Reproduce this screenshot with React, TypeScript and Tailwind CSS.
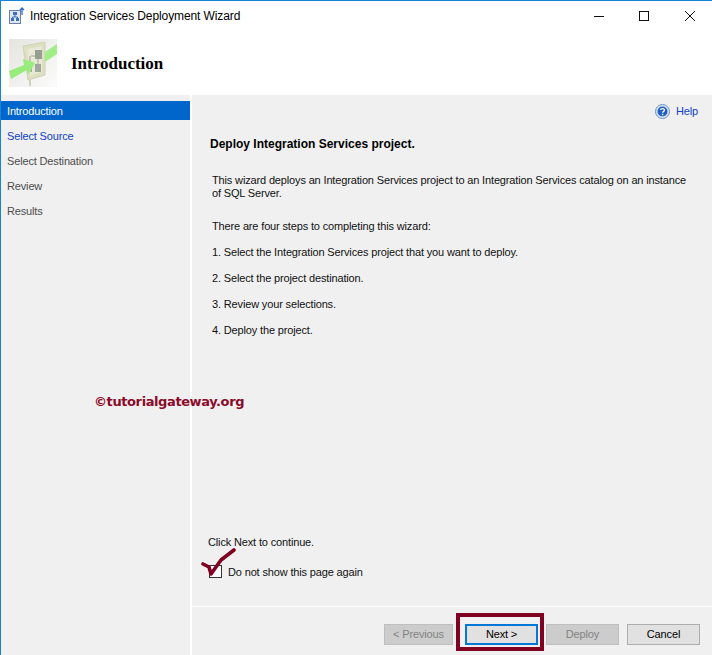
const font = "font-['Liberation_Sans',Arial,sans-serif]"

const steps = [
  { label: "Select Source", color: "text-[#0f3fc4]" },
  { label: "Select Destination", color: "text-[#4d4d4d]" },
  { label: "Review", color: "text-[#4d4d4d]" },
  { label: "Results", color: "text-[#4d4d4d]" },
]

const instructions = [
  "1. Select the Integration Services project that you want to deploy.",
  "2. Select the project destination.",
  "3. Review your selections.",
  "4. Deploy the project.",
]

function TitleIcon() {
  return (
    <svg width="17" height="18" viewBox="0 0 17 18" className="shrink-0">
      <rect x="0.5" y="3.5" width="11" height="13" fill="#dfe6f2" stroke="#6a7fa8" />
      <rect x="4" y="5" width="4" height="3" fill="#3b6fb8" />
      <rect x="2" y="11" width="3" height="3" fill="#3b6fb8" />
      <rect x="7" y="11" width="3" height="3" fill="#3b6fb8" />
      <path d="M6 8v2M3.5 11v-1h5v1" stroke="#3b6fb8" fill="none" />
      <path d="M13 8V1M11 3l2-2 2 2" stroke="#2e6fc4" strokeWidth="1.3" fill="none" />
    </svg>
  )
}

function WizardIcon() {
  return (
    <svg width="48" height="48" viewBox="0 0 48 48" className="shrink-0">
      <defs>
        <linearGradient id="bg" x1="0" y1="0" x2="1" y2="1">
          <stop offset="0" stopColor="#e4e4e0" />
          <stop offset="1" stopColor="#fbfbfb" />
        </linearGradient>
      </defs>
      <rect width="48" height="48" fill="url(#bg)" />
      <g className="blur-[0.6px]">
        <path d="M14 7L36 3V36L19 41Z" fill="#dcdfc0" stroke="#cfd1b4" />
        <path d="M18 10L33 7V33L21 37Z" fill="#e8e8d6" />
        <rect x="26" y="11" width="7" height="9" fill="#989c92" />
        <rect x="26" y="25" width="6" height="8" fill="#a3a69c" />
        <path d="M19 32L23 25V33Z" fill="#a3a69c" />
        <path d="M22 17H26M29 20V25M21 23V17" stroke="#a3a69c" fill="none" />
        <path d="M36 13L48 5V15L36 23Z" fill="#a2ee86" />
        <path d="M0 32L15 26L14 20L26 24L19 36L18 31L2 40Z" fill="#98ec7c" />
        <path d="M21 41V47" stroke="#cfcfba" strokeWidth="2" />
      </g>
    </svg>
  )
}

function HelpIcon() {
  return (
    <svg width="15" height="15" viewBox="0 0 15 15" className="shrink-0">
      <circle cx="7.5" cy="7.5" r="7" fill="#dbe6f6" stroke="#6f8fcb" />
      <circle cx="7.5" cy="7.5" r="5" fill="#1f5fc0" />
      <path d="M5.6 6C5.8 4.2 9.6 4.2 9.5 6.2C9.4 7.4 7.6 7.4 7.6 8.8" stroke="#fff" strokeWidth="1.3" fill="none" />
      <rect x="6.9" y="9.8" width="1.4" height="1.4" fill="#fff" />
    </svg>
  )
}

function Button({ label, className }: { label: string; className: string }) {
  return (
    <button className={`flex h-[21px] items-center justify-center border text-[11px] ${className}`}>
      {label}
    </button>
  )
}

export default function App() {
  return (
    <div className={`${font} relative flex h-[655px] w-[712px] flex-col overflow-hidden border-l border-t border-l-[#1583d8] border-t-[#1583d8] bg-white text-[11px] tracking-[-0.15px] text-[#111]`}>
      <div className="flex h-[94px] flex-col">
        <div className="flex h-[30px] items-center pl-2">
          <TitleIcon />
          <span className="ml-[4px] text-xs tracking-[-0.1px] text-black">Integration Services Deployment Wizard</span>
          <div className="ml-auto flex items-center">
            <svg width="118" height="12" viewBox="0 0 118 12" className="mb-[1px]">
              <path d="M0 6.5H10" stroke="#111" />
              <rect x="45.5" y="1.5" width="9" height="9" fill="none" stroke="#111" />
              <path d="M91 1L101 11M101 1L91 11" stroke="#111" />
            </svg>
          </div>
        </div>
        <div className="flex items-center pl-[8px] pt-[8px]">
          <WizardIcon />
          <h1 className="ml-[14px] mt-[1px] font-['Liberation_Serif',serif] text-[17px] font-bold tracking-normal text-black">Introduction</h1>
        </div>
      </div>

      <div className="flex min-h-0 flex-1 gap-[2px]">
        <nav className="w-[189px] bg-[#f0f0f0] pt-[6px]">
          <div className="mb-[6px] flex h-[19px] items-center bg-[#0066cc] pl-[6px] pt-[1px] text-white">Introduction</div>
          {steps.map((step) => (
            <div key={step.label} className={`mb-[6px] flex h-[19px] items-center pl-[6px] pt-[1px] ${step.color}`}>
              {step.label}
            </div>
          ))}
        </nav>

        <main className="flex flex-1 flex-col bg-[#f0f0f0]">
          <div className="flex flex-1 flex-col">
            <div className="flex h-[32px] items-center justify-end gap-[6px] pr-[14px] pt-[1px] text-[#0f3fc4]">
              <HelpIcon />
              <span>Help</span>
            </div>
            <h2 className="ml-[18px] mt-[9px] h-[16px] text-xs font-bold leading-4 tracking-normal text-black">Deploy Integration Services project.</h2>
            <p className="ml-[20px] mr-[20px] mt-[22px] leading-[12.5px]">
              This wizard deploys an Integration Services project to an Integration Services catalog on an instance of SQL Server.
            </p>
            <p className="ml-[20px] mt-[20px] h-[14px] leading-[14px]">There are four steps to completing this wizard:</p>
            <ul className="ml-[20px] mt-[12px] flex flex-col gap-[12px]">
              {instructions.map((line) => (
                <li key={line} className="h-[14px] leading-[14px]">{line}</li>
              ))}
            </ul>
            <p className="ml-[16px] mt-auto h-[14px] leading-[14px]">Click Next to continue.</p>
            <label className="ml-[17px] mb-[26px] mt-[15px] flex items-center gap-[6px]">
              <span className="h-[13px] w-[13px] border border-[#333] bg-white" />
              <span>Do not show this page again</span>
            </label>
          </div>
          <div className="flex h-[49px] items-start border-t border-white pl-[192px] pt-[17px]">
            <Button label="< Previous" className="w-[69px] border-[#bfbfbf] bg-[#cccccc] text-[#838383]" />
            <Button label="Next >" className="ml-[12px] w-[73px] border-2 border-[#0078d7] bg-[#e1e1e1] text-black" />
            <Button label="Deploy" className="ml-[8px] w-[73px] border-[#bfbfbf] bg-[#cccccc] text-[#838383]" />
            <Button label="Cancel" className="ml-[8px] w-[73px] border-[#adadad] bg-[#e1e1e1] text-black" />
          </div>
        </main>
      </div>

      <span className="absolute left-[93px] top-[393px] font-['DejaVu_Sans',sans-serif] text-[13px] font-bold leading-4 tracking-[-0.4px] text-[#8b0a2a]">©tutorialgateway.org</span>
      <div className="absolute left-[455px] top-[612px] h-[38px] w-[88px] border-4 border-[#7f0020]" />
      <svg width="36" height="32" viewBox="0 0 36 32" className="absolute left-[200px] top-[546px]">
        <path d="M2 17L8 20L10 27L20 13L33 3" fill="none" stroke="#7f0020" strokeWidth="3.6" strokeLinecap="round" strokeLinejoin="round" />
      </svg>
    </div>
  )
}
